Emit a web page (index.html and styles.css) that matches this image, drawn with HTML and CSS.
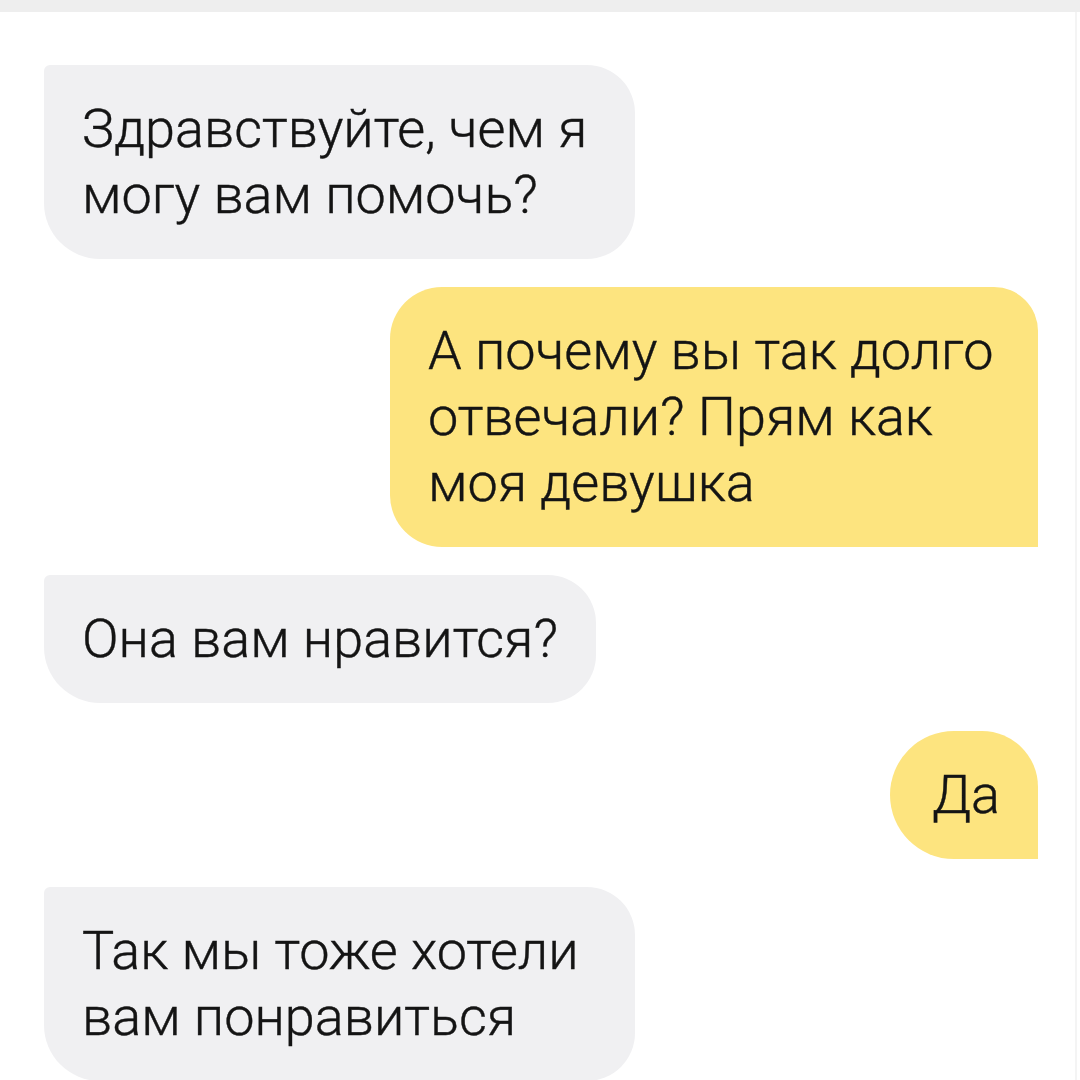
FILE: index.html
```html
<!DOCTYPE html>
<html lang="ru">
<head>
    <meta charset="UTF-8">
    <meta name="viewport" content="width=device-width, initial-scale=1.0">
    <title>Чат поддержки</title>
    <link rel="stylesheet" href="styles.css">
</head>
<body>
    <div class="topbar"></div>
    <div class="chat">
        <div class="msg msg-in">Здравствуйте, чем я могу вам помочь?</div>
        <div class="msg msg-out">А почему вы так долго отвечали? Прям как моя девушка</div>
        <div class="msg msg-in">Она вам нравится?</div>
        <div class="msg msg-out msg-short">Да</div>
        <div class="msg msg-in">Так мы тоже хотели вам понравиться</div>
    </div>
</body>
</html>
```

FILE: styles.css
```css
body {
    margin: 0;
    background-color: #fff;
    font-family: Roboto, "Noto Sans", sans-serif;
    font-weight: 300;
    color: #141414;
    height: 1080px;
    overflow: hidden;
}
.topbar {
    height: 12px;
    background-color: #eeeeee;
}
.chat {
    display: flex;
    flex-direction: column;
    gap: 28px;
    padding: 53px 37px 0 44px;
    border-right: 2px solid #f4f4f4;
    margin-right: 3px;
    min-height: 1068px;
    box-sizing: border-box;
}
.msg {
    font-size: 54px;
    line-height: 66px;
    padding: 31px 38px;
    -webkit-text-stroke: 0.4px #141414;
}
.msg-in {
    align-self: flex-start;
    max-width: 515px;
    background-color: #f0f0f2;
    border-radius: 6px 48px 48px 56px;
}
.msg-out {
    align-self: flex-end;
    max-width: 572px;
    background-color: #fde47f;
    border-radius: 52px 44px 0 52px;
}
.msg-short {
    padding-left: 42px;
    border-radius: 64px 56px 0 64px;
}
```
